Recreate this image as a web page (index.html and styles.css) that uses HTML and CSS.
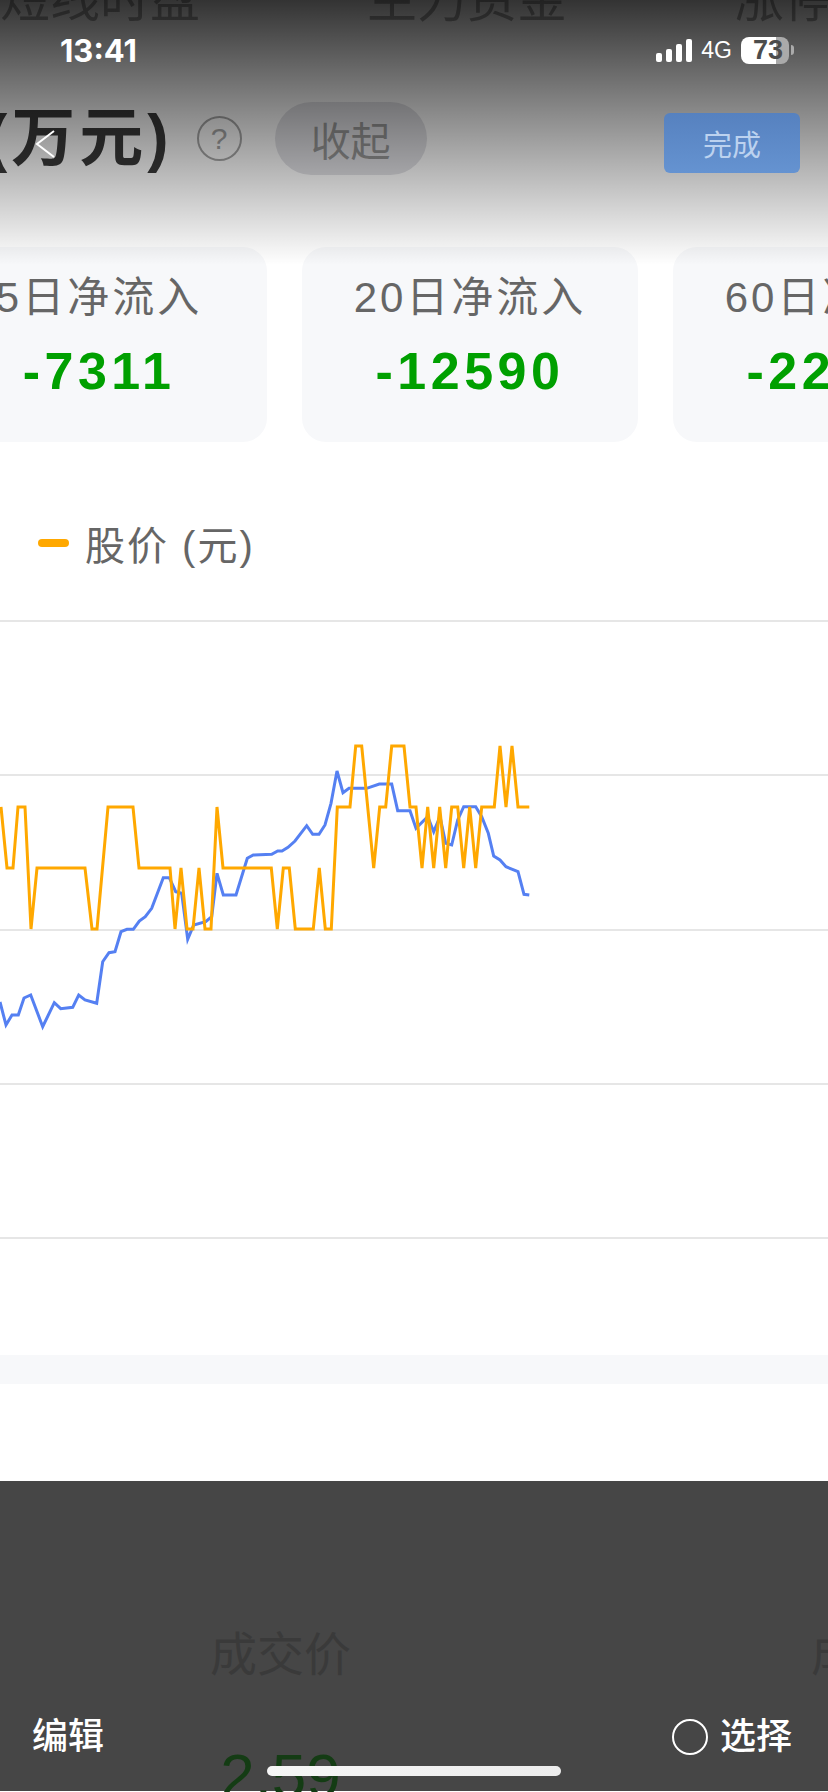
FILE: index.html
```html
<!DOCTYPE html>
<html lang="zh-CN">
<head>
    <meta charset="UTF-8">
    <title>主力净流入</title>
    <link rel="stylesheet" href="styles.css">
</head>
<body>
    <div class="page">
        <!-- tabs scrolled mostly off the top -->
        <div class="tabs">
            <span>短线时盘</span>
            <span>主力资金</span>
            <span>涨停分析</span>
        </div>

        <div class="title-row">
            <h1 class="title">(万元)</h1>
            <span class="help">?</span>
            <span class="pill">收起</span>
        </div>

        <div class="cards">
            <div class="card">
                <div class="card-label">5日净流入</div>
                <div class="card-value">-7311</div>
            </div>
            <div class="card">
                <div class="card-label">20日净流入</div>
                <div class="card-value">-12590</div>
            </div>
            <div class="card">
                <div class="card-label">60日净流入</div>
                <div class="card-value">-22486</div>
            </div>
        </div>

        <div class="legend">
            <span class="legend-dash"></span>
            <span>股价 (元)</span>
        </div>

        <div class="chart">
            <div class="grid-row"></div>
            <div class="grid-row"></div>
            <div class="grid-row"></div>
            <div class="grid-row"></div>
            <div class="grid-row last"></div>
            <!-- viewBox uses page coordinates, chart starts at y=620 -->
            <svg class="lines" viewBox="0 620 828 600">
                <polyline class="line-blue" points="0,1002 6,1025 12,1015 18.3,1015 24,998 30.7,995 42.7,1026.7 54.3,1002.7 60.7,1008.7 72.7,1007.3 78.7,995 85,1000 96.7,1003.3 102.7,961.7 109,952.7 115,951.7 121,931.7 127,929.3 133.3,929.3 139.3,921 145.3,916.7 151.7,908.3 163.3,877.7 169.3,877.7 175.7,891.7 181.7,893.3 187.7,939.3 193.7,925 205.7,921.7 211.7,916.7 217,873.3 223.3,895 236,895 247.3,858.3 253.3,855 271.7,854.3 277.7,851 282,851 288,847.3 295,841 306.7,825.7 312.7,834.3 319,834.3 325,825 331,803.3 337,771 343,792.7 349,788.3 366.7,788.3 379.3,784 391.7,784 397.7,810.7 410,810.7 416,828.3 427.7,816.7 433.7,831.7 440,816.7 445.7,843.3 451.7,845 457.7,820 463.7,806.7 475.7,806.7 481.7,816.7 488.3,833.3 493.7,856 500,860 506,866.7 518,871.7 524,894.3 529.3,895"/>
                <polyline class="line-orange" points="1,807 7,868 13,868 18,807 25,807 31,929 37,868 85,868 92,929 97,929 108,807 133,807 139,868 170,868 175,929 181,868 187,929 193,929 199,868 205,929 211,929 217,807 223,868 271.3,868 277.3,929 283.3,868 289.3,868 295.3,929 313.3,929 319.3,868 325.3,929 331.3,929 337.3,807 350,807 355.7,746 361.7,746 373.7,868 379.7,807 385.7,807 391.7,746 404,746 410,807 416,807 422,868 427.7,807 433.7,868 439.7,807 445.7,868 451.7,807 457.7,807 463.7,868 469.7,807 475.7,868 481.7,807 494.3,807 500,746 506,807 512,746 518,807 529.3,807"/>
            </svg>
        </div>

        <div class="band"></div>
        <div class="gap"></div>

        <!-- dimmed sheet, the table under it shows through -->
        <div class="sheet">
            <div class="sheet-col">
                <div class="sheet-label">成交价</div>
                <div class="sheet-value">2.59</div>
            </div>
            <div class="sheet-col">
                <div class="sheet-label">成交量</div>
            </div>
        </div>
    </div>

    <div class="scrim"></div>

    <div class="status-bar">
        <span class="time">13:41</span>
        <div class="status-right">
            <div class="signal">
                <i class="s1"></i><i class="s2"></i><i class="s3"></i><i class="s4"></i>
            </div>
            <span class="net">4G</span>
            <div class="battery"><span>73</span></div>
            <span class="battery-nub"></span>
        </div>
    </div>

    <svg class="back" viewBox="0 0 20 28">
        <polyline points="19,1 2,14 19,27"/>
    </svg>
    <button type="button" class="done">完成</button>

    <div class="sheet-actions">
        <span>编辑</span>
        <div class="select">
            <span class="radio"></span>
            <span>选择</span>
        </div>
    </div>
    <div class="home-bar"></div>
</body>
</html>
```

FILE: styles.css
```css
* {
    box-sizing: border-box;
}

html, body {
    margin: 0;
    height: 1792px;
    overflow: hidden;
    background: #fff;
}

body {
    position: relative;
    font-family: "Liberation Sans", "Noto Sans CJK SC", sans-serif;
    color: #666;
}

.page {
    width: 828px;
    height: 1792px;
    overflow: hidden;
}

/* tabs */
.tabs {
    height: 30px;
    display: flex;
    align-items: flex-end;
    gap: 167px;
    white-space: nowrap;
    font-size: 50px;
    line-height: 60px;
    color: #a8a8a8;
}

/* title row */
.title-row {
    height: 73px;
    margin-top: 72px;
    display: flex;
    align-items: center;
}

.title {
    margin: 0 0 0 -14px;
    font-size: 64px;
    line-height: 73px;
    font-weight: 700;
    letter-spacing: 4px;
    color: #3a3a3a;
    white-space: nowrap;
}

.help {
    width: 45px;
    height: 45px;
    margin-left: 24px;
    border: 2px solid #a8a8a8;
    border-radius: 50%;
    display: flex;
    align-items: center;
    justify-content: center;
    font-size: 30px;
    color: #a8a8a8;
}

.pill {
    width: 152px;
    height: 73px;
    margin-left: 33px;
    border-radius: 37px;
    background: #e2e2e6;
    display: flex;
    align-items: center;
    justify-content: center;
    font-size: 40px;
    color: #989898;
}

/* cards */
.cards {
    display: flex;
    gap: 35px;
    margin: 72px 0 0 -69px;
}

.card {
    flex: none;
    width: 336px;
    height: 195px;
    padding-top: 26px;
    border-radius: 24px;
    background: #f7f8fa;
    text-align: center;
    white-space: nowrap;
}

.card-label {
    font-size: 42px;
    line-height: 50px;
    letter-spacing: 3px;
    color: #666;
}

.card-value {
    margin-top: 18px;
    font-size: 52px;
    line-height: 60px;
    font-weight: 700;
    letter-spacing: 4.5px;
    color: #00a000;
}

/* legend */
.legend {
    height: 44px;
    margin: 79px 0 0 38px;
    display: flex;
    align-items: center;
    gap: 16px;
    font-size: 40px;
    letter-spacing: 2px;
    color: #666;
}

.legend-dash {
    width: 31px;
    height: 8px;
    border-radius: 4px;
    background: #ffa800;
}

/* chart */
.chart {
    position: relative;
    margin-top: 55px;
}

.grid-row {
    height: 154.3px;
    border-top: 2px solid #e6e6e6;
}

.grid-row.last {
    height: 118px;
}

.lines {
    position: absolute;
    left: 0;
    top: 0;
    width: 828px;
    height: 600px;
}

.lines polyline {
    fill: none;
    stroke-width: 3px;
    stroke-linejoin: miter;
}

.line-blue {
    stroke: #5580f2;
}

.line-orange {
    stroke: #ffa800;
}

.band {
    height: 29px;
    background: #f7f8fa;
}

.gap {
    height: 97px;
}

/* bottom sheet */
.sheet {
    height: 310px;
    padding: 144px 0 0 210px;
    background: #464646;
    display: flex;
    gap: 460px;
    white-space: nowrap;
}

.sheet-col {
    flex: none;
    text-align: center;
}

.sheet-label {
    font-size: 47px;
    line-height: 60px;
    color: #3a3a3a;
}

.sheet-value {
    margin-top: 56px;
    font-size: 62px;
    line-height: 70px;
    color: #143c14;
}

/* things on top of the page */
.scrim {
    position: absolute;
    left: 0;
    top: 0;
    width: 828px;
    height: 265px;
    background: linear-gradient(rgba(0, 0, 0, 0.8), rgba(0, 0, 0, 0));
}

.status-bar {
    position: absolute;
    left: 60px;
    top: 36px;
    width: 734px;
    height: 28px;
    display: flex;
    align-items: center;
    justify-content: space-between;
    color: #fff;
}

.time {
    font-family: Inter, "Liberation Sans", sans-serif;
    font-size: 31px;
    font-weight: 700;
}

.status-right {
    display: flex;
    align-items: center;
}

.signal {
    display: flex;
    align-items: flex-end;
    gap: 4px;
    height: 23px;
}

.signal i {
    width: 6px;
    border-radius: 2px;
    background: #fff;
}

.s1 { height: 9px; }
.s2 { height: 13px; }
.s3 { height: 18px; }
.s4 { height: 23px; }

.net {
    margin-left: 9px;
    font-size: 23px;
    font-weight: 500;
}

.battery {
    width: 48px;
    height: 27px;
    margin-left: 9px;
    border-radius: 8px;
    background: linear-gradient(90deg, #fff 73%, #aaa 73%);
    display: flex;
    align-items: center;
    justify-content: center;
    font-size: 27px;
    font-weight: 700;
    color: #4c4c4c;
}

.battery span {
    margin-left: 6px;
}

.battery-nub {
    width: 3px;
    height: 10px;
    margin-left: 2px;
    border-radius: 0 3px 3px 0;
    background: #aaa;
}

.back {
    position: absolute;
    left: 35px;
    top: 130px;
    width: 20px;
    height: 28px;
}

.back polyline {
    fill: none;
    stroke: #fff;
    stroke-width: 2px;
}

.done {
    position: absolute;
    left: 664px;
    top: 113px;
    width: 136px;
    height: 60px;
    padding: 0;
    border: 0;
    border-radius: 6px;
    background: linear-gradient(#5681bf, #6593d1);
    font-family: "Noto Sans CJK SC", sans-serif;
    font-size: 29px;
    color: #bcd2ef;
}

.sheet-actions {
    position: absolute;
    left: 32px;
    top: 1715px;
    width: 760px;
    display: flex;
    align-items: center;
    justify-content: space-between;
    font-size: 36px;
    line-height: 44px;
    font-weight: 500;
    color: #fff;
}

.select {
    display: flex;
    align-items: center;
    gap: 12px;
}

.radio {
    width: 36px;
    height: 36px;
    border: 2px solid #fff;
    border-radius: 50%;
}

.home-bar {
    position: absolute;
    left: 267px;
    top: 1766px;
    width: 294px;
    height: 10px;
    border-radius: 5px;
    background: linear-gradient(90deg, #f6f6f6, #ececec);
}
```
